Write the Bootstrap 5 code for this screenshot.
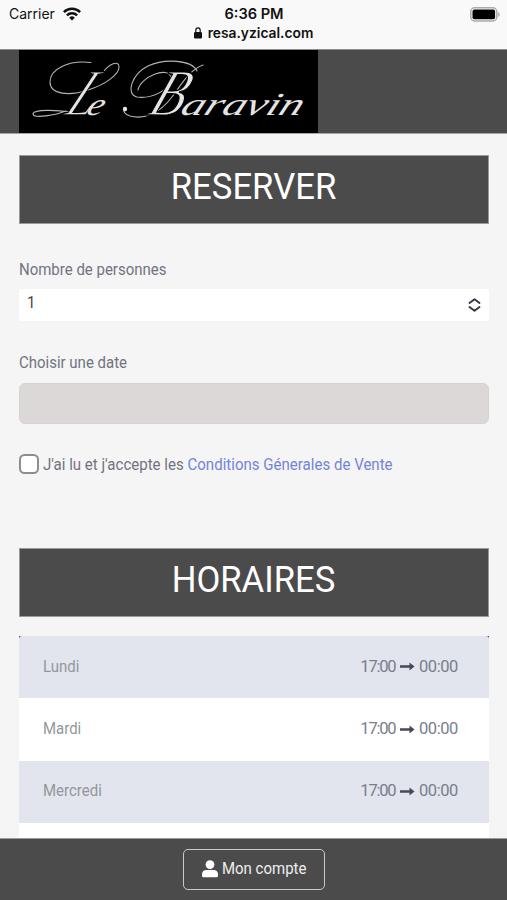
<!DOCTYPE html>
<html lang="fr">
<head>
<meta charset="utf-8">
<meta name="viewport" content="width=device-width, initial-scale=1">
<title>Le Baravin – Réserver</title>
<link href="https://cdn.jsdelivr.net/npm/bootstrap@5.3.0/dist/css/bootstrap.min.css" rel="stylesheet">
<style>
body{background:#f5f5f5;font-family:Roboto,"Open Sans",sans-serif;font-size:16.5px;line-height:24px;color:#71747f;height:900px;overflow:hidden}
svg{display:block;flex-shrink:0}
.status{height:49px;background:#f9f9f9;font-family:Inter,sans-serif;color:#111;font-size:14px;line-height:18px}
.status .side{width:100px}
.status-top{height:18px;padding:0 7px 0 9px;margin-top:5px}
.clock{font-size:14.6px;margin-right:1px}
.host{line-height:16px;padding-top:2px;font-size:13.8px}
.host svg{margin-right:6px}
.brandbar{height:85px;background:#4b4b4b;padding-left:19px;border-bottom:1px solid #a5a5a5;border-top:1px solid #8d8d8d}
.logo{width:299px;height:83px;background:#000}
.page{padding:0 18px 0 19px}
.title{height:69px;background:#4b4b4b;color:#fff;border:1px solid #999;font-size:37.5px;line-height:60px;font-weight:400}
.fit{display:inline-block;transform:scaleX(.908);transform-origin:left center;white-space:nowrap}
.mid{transform:scaleX(.925);transform-origin:center}
.choice{height:32px;border:0;background:#fff;padding:0 8px;color:#444;border-radius:2px}
.datebox{height:41px;border:1px solid #d8d3d3;border-radius:6px;background:#ddd8d8}
.tick{width:20px;height:20px;border:2px solid #8d8d8d;border-radius:5.5px;background:#fff;margin:0 4px 2px 0}
.agree{transform:scaleX(.912);padding-top:1px}
.terms{color:#7484d8;text-decoration:none}
.hours{margin-top:19px;background:#4b4b4b}
.day{height:62.4px;padding:0 31px 1px 24px;background:#fff;color:#93979b;border:0}
.day:nth-child(odd){background:#e2e5ed}
.day:first-child{border-radius:3px 3px 0 0}
.time{color:#7a7e8b}
.time span{letter-spacing:-.4px}
.time span:first-child{letter-spacing:-1.2px}
.time svg{margin:0 4px 0 4.5px}
.footer-bar{height:62px;background:#4b4b4b;border-top:1px solid #999}
.account{width:142px;height:41px;border:1.5px solid #c9c9c9;border-radius:5px;color:#eee;padding:0 0 2px 18px}
</style>
<script src="https://cdn.jsdelivr.net/npm/bootstrap@5.3.0/dist/js/bootstrap.bundle.min.js"></script>
</head>
<body class="d-flex flex-column">
<header class="flex-shrink-0">
  <div class="status overflow-hidden">
    <div class="status-top d-flex justify-content-between align-items-center">
      <div class="side d-flex align-items-center"><span>Carrier</span>
        <svg class="ms-2" width="18" height="14" viewBox="0 0 18 14" fill="none" stroke="#111" stroke-width="2.5"><path d="M.9 5.1a11.5 11.5 0 0 1 16.2 0M3.9 8.4a7.3 7.3 0 0 1 10.2 0"/><path d="M9 13.6l-2.8-2.9a4 4 0 0 1 5.6 0z" fill="#111" stroke="none"/></svg>
      </div>
      <span class="clock fw-semibold">6:36 PM</span>
      <div class="side d-flex justify-content-end">
        <svg width="30" height="15" viewBox="0 0 30 15"><rect x=".8" y=".8" width="26" height="13.2" rx="4" fill="#f9f9f9" stroke="#aaa" stroke-width="1.5"/><rect x="2.5" y="2.5" width="22.6" height="9.8" rx="2" fill="#000"/><path d="M28.2 5c2 .8 2 4 0 4.8z" fill="#aaa"/></svg>
      </div>
    </div>
    <div class="host d-flex justify-content-center align-items-center fw-semibold"><svg width="8" height="12" viewBox="0 0 8 12"><rect y="5" width="8" height="6.5" rx="1.3" fill="#111"/><path d="M1.8 5.5V3.4a2.2 2.6 0 0 1 4.4 0v2.1" fill="none" stroke="#111" stroke-width="1.2"/></svg>resa.yzical.com</div>
  </div>
  <div class="brandbar">
    <div class="logo">
      <svg width="299" height="83" viewBox="19 50 299 83" fill="#e4e4e4" font-family="'Liberation Serif',serif" font-style="italic">
        <g fill="none" stroke="#b4b4b4" stroke-width="1.1" stroke-linecap="round">
          <path d="M91 62.5C68 60 50 69 50 82c0 13 20 14 38 8c19-6 31-16 31-23c0-7-10-4-17 7"/>
          <path d="M70 112c-12-2-37-3-37 2c0 5 23 1 33-3"/>
          <path d="M138 90c2-13 31-25 33-12c1 13-22 21-34 19c-12-3-5-23 11-31c17-8 44-6 49 5"/>
          <path d="M203 65c-14 5-22 20-31 32c-12 16-28 23-42 19c-6-2-7-5-5-7"/>
        </g>
        <circle cx="125" cy="109" r="2.2"/>
        <text transform="translate(63 115) skewX(-28)" font-size="66" textLength="27" lengthAdjust="spacingAndGlyphs" stroke="#000" stroke-width="1.4">L</text>
        <text transform="translate(85 115) skewX(-22)" font-size="32" textLength="16" lengthAdjust="spacingAndGlyphs">e</text>
        <text transform="translate(146 115) skewX(-22)" font-size="66" textLength="34" lengthAdjust="spacingAndGlyphs" stroke="#000" stroke-width="1.4">B</text>
        <text transform="translate(179 115) skewX(-22)" font-size="32" textLength="121" lengthAdjust="spacingAndGlyphs">aravin</text>
      </svg>
    </div>
  </div>
</header>
<main class="page flex-grow-1 overflow-hidden">
  <h1 class="title text-center mb-0" style="margin-top:21px"><span class="fit mid">RESERVER</span></h1>
  <form>
    <label class="d-block" style="margin-top:34px"><span class="fit">Nombre de personnes</span></label>
    <div class="choice d-flex justify-content-between align-items-center" style="margin-top:7px"><span class="fit pb-1">1</span>
      <svg width="13" height="14" viewBox="0 0 13 14" fill="none" stroke="#34363f" stroke-width="1.9" stroke-linecap="round" stroke-linejoin="round"><path d="M1.5 5L6.5 1.3L11.5 5M1.5 9L6.5 12.7L11.5 9"/></svg></div>
    <label class="d-block" style="margin-top:30px"><span class="fit">Choisir une date</span></label>
    <div class="datebox" style="margin-top:8px"></div>
    <div class="d-flex align-items-center" style="margin-top:28px"><span class="tick"></span><span class="fit agree">J'ai lu et j'accepte les <a class="terms" href="#">Conditions Génerales de Vente</a></span></div>
  </form>
  <h2 class="title text-center mb-0" style="margin-top:71px"><span class="fit mid">HORAIRES</span></h2>
  <div class="hours">
    <div class="day d-flex justify-content-between align-items-center"><span class="fit">Lundi</span><span class="time d-flex align-items-center"><span>17:00</span><svg width="15" height="9" viewBox="0 0 15 9"><path d="M0 3.2h9.500V.5l5 4-5 4V5.800H0z" fill="#454958"/></svg><span>00:00</span></span></div>
    <div class="day d-flex justify-content-between align-items-center"><span class="fit">Mardi</span><span class="time d-flex align-items-center"><span>17:00</span><svg width="15" height="9" viewBox="0 0 15 9"><path d="M0 3.2h9.500V.5l5 4-5 4V5.800H0z" fill="#454958"/></svg><span>00:00</span></span></div>
    <div class="day d-flex justify-content-between align-items-center"><span class="fit">Mercredi</span><span class="time d-flex align-items-center"><span>17:00</span><svg width="15" height="9" viewBox="0 0 15 9"><path d="M0 3.2h9.500V.5l5 4-5 4V5.800H0z" fill="#454958"/></svg><span>00:00</span></span></div>
    <div class="day"></div>
  </div>
</main>
<footer class="footer-bar flex-shrink-0 d-flex justify-content-center align-items-center">
  <a class="account d-flex align-items-center text-decoration-none" href="#"><svg class="me-1" width="16" height="18" viewBox="0 0 16 18" fill="#fff"><circle cx="8" cy="4.6" r="4.4"/><path d="M4.6 10h6.8Q16 10 16 14.6v1.2q0 1.500-1.500 1.500h-13Q0 17.300 0 15.800v-1.200Q0 10 4.600 10z"/></svg><span class="fit">Mon compte</span></a>
</footer>
</body>
</html>
